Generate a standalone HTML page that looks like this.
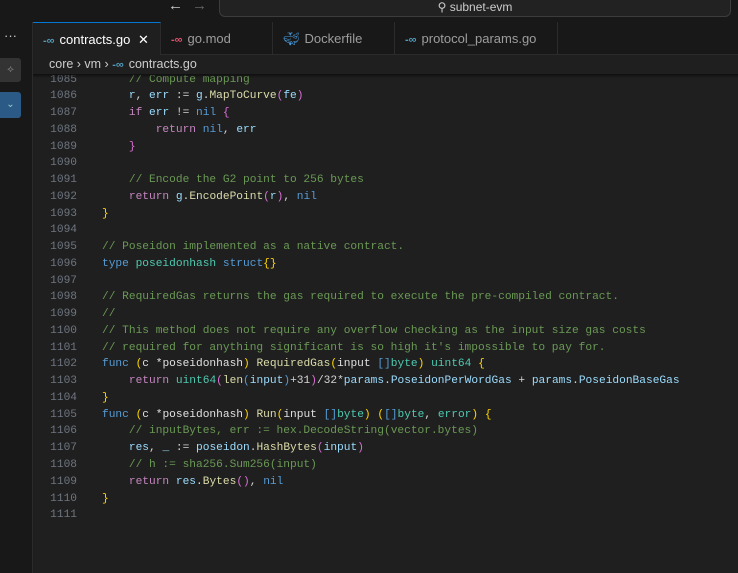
<!DOCTYPE html><html><head><style>
*{margin:0;padding:0;box-sizing:border-box}
body{width:738px;height:573px;background:#1f1f1f;overflow:hidden;position:relative;font-family:"Liberation Sans",sans-serif}
.top{position:absolute;left:0;top:0;width:738px;height:22px;background:#181818}
.search{position:absolute;left:219px;top:-6px;width:512px;height:23px;border:1px solid #3c3c3c;border-radius:6px;background:#222;color:#ccc;font-size:12px;text-align:center;line-height:22px;padding-top:1px}
.side{position:absolute;left:0;top:22px;width:33px;height:551px;background:#181818;border-right:1px solid #2b2b2b}
.tabs{position:absolute;left:33px;top:22px;width:705px;height:33px;background:#181818;border-bottom:1px solid #2b2b2b}
.tab{position:absolute;top:0;height:33px;border-right:1px solid #2b2b2b;color:#9d9d9d;font-size:13px;line-height:33px;padding-left:10px}
.tab.a{background:#1f1f1f;color:#fff;border-top:1px solid #0078d4}
.go{color:#519aba;font-weight:bold;font-size:11px;margin-right:5px}
.bc{position:absolute;left:49px;top:57px;color:#ccc;font-size:12.5px}
.code{position:absolute;left:0;top:71.5px;width:738px;font-family:"Liberation Mono",monospace;font-size:11.2px;line-height:16.76px;white-space:pre}
.ln{position:absolute;left:40px;width:37px;text-align:right;color:#6e7681}
.tx{position:absolute;left:102px;color:#d4d4d4}
.k{color:#569cd6}.c{color:#c586c0}.f{color:#dcdcaa}.v{color:#9cdcfe}.t{color:#4ec9b0}.m{color:#6a9955}.y{color:#ffd700}.o{color:#da70d6}.n{color:#569cd6}.w{color:#e0e0e0}
.shadow{position:absolute;left:33px;top:74px;width:705px;height:4px;background:linear-gradient(#0008,#0000)}
</style></head><body>
<div class="code" id="c"></div>
<div style="position:absolute;left:33px;top:55px;width:705px;height:20px;background:#1f1f1f"></div>
<div class="shadow"></div>
<div class="top"><span style="position:absolute;left:168px;top:-3px;color:#ccc;font-size:15px">←</span><span style="position:absolute;left:192px;top:-3px;color:#666;font-size:15px">→</span><div class="search">⚲ subnet-evm</div></div>
<div class="side"><div style="position:absolute;left:4px;top:6px;color:#ccc;font-size:13px">···</div>
<div style="position:absolute;left:0;top:36px;width:21px;height:24px;background:#333;border-radius:0 3px 3px 0;color:#888;font-size:10px;text-align:center;line-height:24px">⟡</div>
<div style="position:absolute;left:0;top:70px;width:21px;height:26px;background:#2c5a86;border-radius:0 3px 3px 0;color:#9cc;font-size:10px;text-align:center;line-height:26px">⌄</div></div>
<div class="tabs">
<div class="tab a" style="left:0;width:128px"><span class="go">-∞</span>contracts.go <span style="margin-left:4px">✕</span></div>
<div class="tab" style="left:128px;width:112px"><span class="go" style="color:#e0506e">-∞</span>go.mod</div>
<div class="tab" style="left:240px;width:122px"><span style="color:#4a9de0;margin-right:5px">🐳︎</span>Dockerfile</div>
<div class="tab" style="left:362px;width:163px"><span class="go">-∞</span>protocol_params.go</div>
</div>
<div class="bc">core › vm › <span class="go">-∞</span>contracts.go</div>
<script>
var L=[
'    <span class="m">// Compute mapping</span>',
'    <span class="v">r</span>, <span class="v">err</span> := <span class="v">g</span>.<span class="f">MapToCurve</span><span class="o">(</span><span class="v">fe</span><span class="o">)</span>',
'    <span class="c">if</span> <span class="v">err</span> != <span class="n">nil</span> <span class="o">{</span>',
'        <span class="c">return</span> <span class="n">nil</span>, <span class="v">err</span>',
'    <span class="o">}</span>',
'',
'    <span class="m">// Encode the G2 point to 256 bytes</span>',
'    <span class="c">return</span> <span class="v">g</span>.<span class="f">EncodePoint</span><span class="o">(</span><span class="v">r</span><span class="o">)</span>, <span class="n">nil</span>',
'<span class="y">}</span>',
'',
'<span class="m">// Poseidon implemented as a native contract.</span>',
'<span class="k">type</span> <span class="t">poseidonhash</span> <span class="k">struct</span><span class="y">{}</span>',
'',
'<span class="m">// RequiredGas returns the gas required to execute the pre-compiled contract.</span>',
'<span class="m">//</span>',
'<span class="m">// This method does not require any overflow checking as the input size gas costs</span>',
'<span class="m">// required for anything significant is so high it\'s impossible to pay for.</span>',
'<span class="k">func</span> <span class="y">(</span><span class="w">c *poseidonhash</span><span class="y">)</span> <span class="f">RequiredGas</span><span class="y">(</span><span class="w">input</span> <span class="n">[]</span><span class="t">byte</span><span class="y">)</span> <span class="t">uint64</span> <span class="y">{</span>',
'    <span class="c">return</span> <span class="t">uint64</span><span class="o">(</span><span class="f">len</span><span class="n">(</span><span class="v">input</span><span class="n">)</span>+31<span class="o">)</span>/32*<span class="v">params</span>.<span class="v">PoseidonPerWordGas</span> + <span class="v">params</span>.<span class="v">PoseidonBaseGas</span>',
'<span class="y">}</span>',
'<span class="k">func</span> <span class="y">(</span><span class="w">c *poseidonhash</span><span class="y">)</span> <span class="f">Run</span><span class="y">(</span><span class="w">input</span> <span class="n">[]</span><span class="t">byte</span><span class="y">)</span> <span class="y">(</span><span class="n">[]</span><span class="t">byte</span>, <span class="t">error</span><span class="y">)</span> <span class="y">{</span>',
'    <span class="m">// inputBytes, err := hex.DecodeString(vector.bytes)</span>',
'    <span class="v">res</span>, <span class="v">_</span> := <span class="v">poseidon</span>.<span class="f">HashBytes</span><span class="o">(</span><span class="v">input</span><span class="o">)</span>',
'    <span class="m">// h := sha256.Sum256(input)</span>',
'    <span class="c">return</span> <span class="v">res</span>.<span class="f">Bytes</span><span class="o">()</span>, <span class="n">nil</span>',
'<span class="y">}</span>',
''];
var h='';for(var i=0;i<L.length;i++){var t=i*16.76;h+='<div class="ln" style="top:'+t+'px">'+(1085+i)+'</div><div class="tx" style="top:'+t+'px">'+L[i]+'</div>';}
document.getElementById('c').innerHTML=h;
</script>
</body></html>
